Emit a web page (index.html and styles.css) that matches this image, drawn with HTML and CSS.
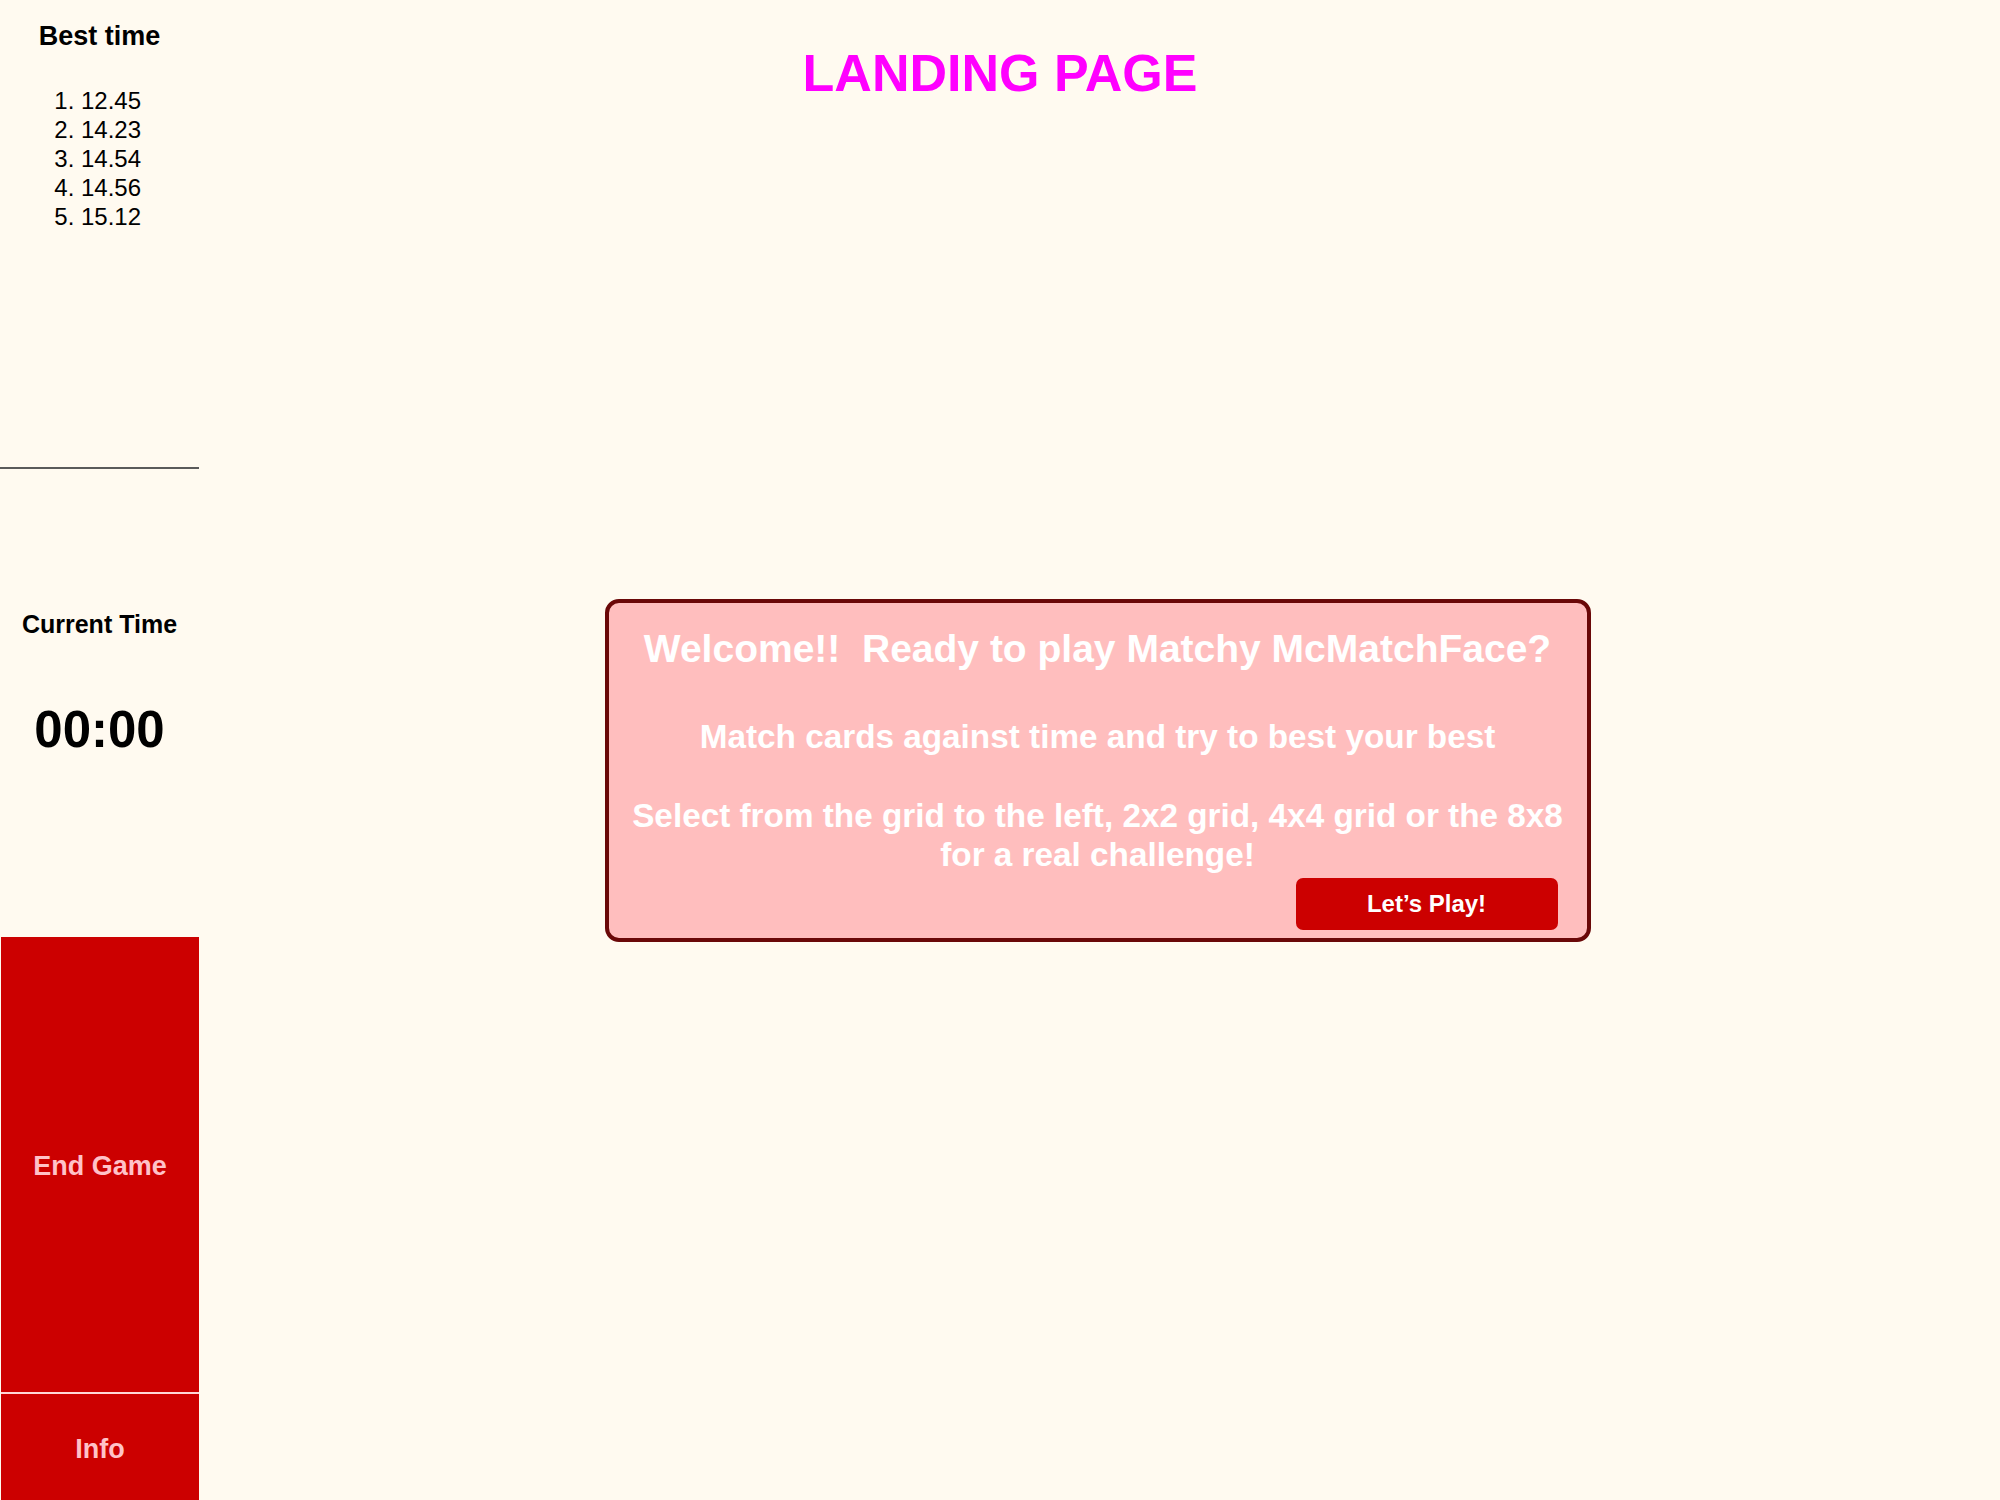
FILE: index.html
```html
<!DOCTYPE html>
<html lang="en">
<head>
<meta charset="utf-8">
<title>Matchy McMatchFace</title>
<link rel="stylesheet" href="styles.css">
</head>
<body>
<div class="app">
  <aside class="sidebar">
    <section class="best">
      <h2 class="best-title">Best time</h2>
      <ol class="best-list">
        <li>12.45</li>
        <li>14.23</li>
        <li>14.54</li>
        <li>14.56</li>
        <li>15.12</li>
      </ol>
    </section>
    <section class="current">
      <h2 class="current-title">Current Time</h2>
      <div class="clock">00:00</div>
    </section>
    <div class="actions">
      <button class="btn-side btn-end">End Game</button>
      <button class="btn-side btn-info">Info</button>
    </div>
  </aside>
  <main class="main">
    <h1 class="page-title">LANDING PAGE</h1>
    <div class="modal">
      <h2 class="modal-title">Welcome!!&nbsp; Ready to play Matchy McMatchFace?</h2>
      <p class="modal-text modal-sub">Match cards against time and try to best your best</p>
      <p class="modal-text modal-select">Select from the grid to the left, 2x2 grid, 4x4 grid or the 8x8 for a real challenge!</p>
      <div class="modal-actions">
        <button class="btn-play">Let’s Play!</button>
      </div>
    </div>
  </main>
</div>
</body>
</html>
```
FILE: styles.css
```css
* { box-sizing: border-box; }
html, body {
  margin: 0;
  padding: 0;
  background: #fffaf0;
  font-family: "Liberation Sans", Arial, Helvetica, sans-serif;
  color: #000;
}
.app {
  display: flex;
  width: 2000px;
  height: 1500px;
}
.sidebar {
  width: 199px;
  flex: 0 0 199px;
  display: flex;
  flex-direction: column;
  height: 1500px;
}
.best {
  flex: 0 0 469px;
  border-bottom: 2px solid #5a5a5a;
  text-align: center;
}
.best-title {
  margin: 22px 0 0;
  font-size: 27px;
  line-height: 29px;
  font-weight: bold;
}
.best-list {
  margin: 35px 0 0;
  padding: 0 0 0 81px;
  text-align: left;
  font-size: 24px;
  line-height: 29px;
}
.current {
  flex: 0 0 468px;
  text-align: center;
}
.current-title {
  margin: 141px 0 0;
  font-size: 25px;
  line-height: 29px;
  font-weight: bold;
}
.clock {
  margin-top: 61px;
  font-size: 51px;
  line-height: 60px;
  font-weight: bold;
}
.actions {
  flex: 1;
  display: flex;
  flex-direction: column;
  padding-left: 1px;
}
.btn-side {
  border: none;
  margin: 0;
  padding: 0;
  width: 198px;
  background: #cc0000;
  color: #ffc2c8;
  font-family: "Liberation Sans", Arial, Helvetica, sans-serif;
  font-weight: bold;
  font-size: 27px;
}
.btn-end {
  flex: 0 0 457px;
  padding-top: 4px;
  border-bottom: 2px solid #ffd6d6;
}
.btn-info {
  flex: 1;
  padding-top: 4px;
}
.main {
  flex: 1;
  display: flex;
  flex-direction: column;
  align-items: center;
}
.page-title {
  align-self: stretch;
  margin: 43px 199px 0 0;
  text-align: center;
  font-size: 52px;
  line-height: 60px;
  font-weight: bold;
  color: #ff00ff;
}
.modal {
  margin: 496px 4px 0 0;
  width: 986px;
  height: 343px;
  background: #ffbebe;
  border: 4px solid #6a0808;
  border-radius: 14px;
  padding: 0 20px;
  color: #fff;
  text-align: center;
}
.modal-title {
  margin: 23px 0 0;
  font-size: 39px;
  line-height: 45px;
  font-weight: bold;
}
.modal-text {
  margin: 0;
  font-size: 33.3px;
  font-weight: bold;
}
.modal-sub {
  margin-top: 47px;
  line-height: 38px;
}
.modal-select {
  margin-top: 40px;
  line-height: 39px;
}
.modal-actions {
  display: flex;
  justify-content: flex-end;
  margin-top: 4px;
  padding-right: 9px;
}
.btn-play {
  width: 262px;
  height: 52px;
  border: none;
  border-radius: 7px;
  background: #cc0000;
  color: #fff;
  font-family: "Liberation Sans", Arial, Helvetica, sans-serif;
  font-weight: bold;
  font-size: 24px;
}
```
